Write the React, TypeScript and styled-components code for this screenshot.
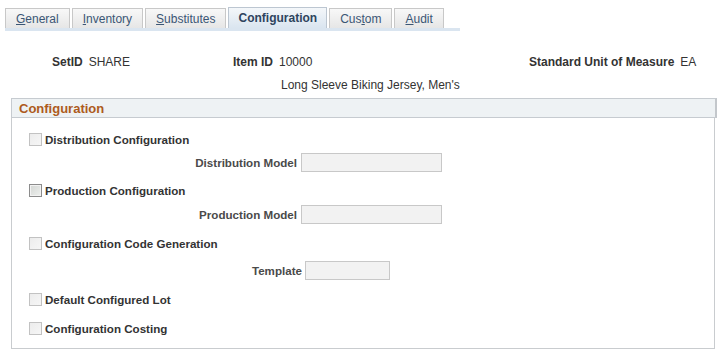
import styled, { createGlobalStyle } from "styled-components";

const GlobalStyle = createGlobalStyle`
  body {
    margin: 0;
    background: #fff;
    font-family: "Liberation Sans", Arial, sans-serif;
    font-size: 12px;
    color: #333;
  }
`;

const Page = styled.div`
  width: 725px;
  height: 358px;
  overflow: hidden;
`;

const TabStrip = styled.div`
  display: flex;
  align-items: flex-end;
  gap: 2px;
  margin: 7px 0 0 5px;
  width: 455px;
  border-bottom: 3px solid #dae5f0;
`;

const Tab = styled.div<{ $active?: boolean }>`
  box-sizing: border-box;
  height: ${(p) => (p.$active ? "21px" : "20px")};
  padding: 0 ${(p) => (p.$active ? "9px" : "10px")};
  display: flex;
  align-items: center;
  border: 1px solid ${(p) => (p.$active ? "#bcc6d1" : "#c8c8c8")};
  border-bottom: none;
  background: ${(p) =>
    p.$active
      ? "linear-gradient(#f4f7fa, #dae5f0)"
      : "linear-gradient(#f8f8f8, #e6e6e6)"};
  color: ${(p) => (p.$active ? "#2e445e" : "#3b5675")};
  font-weight: ${(p) => (p.$active ? "bold" : "normal")};
  white-space: nowrap;

  u {
    text-decoration: underline;
  }
`;

const InfoRow = styled.div`
  display: grid;
  grid-template-columns: 181px 296px auto;
  margin-top: 24px;
  padding-left: 52px;
  line-height: 14px;
`;

const InfoItem = styled.div`
  display: flex;
  gap: 6px;
`;

const InfoLabel = styled.span`
  font-weight: bold;
  color: #333;
`;

const InfoValue = styled.span`
  color: #333;
`;

const Description = styled.div`
  margin-top: 9px;
  padding-left: 281px;
  line-height: 14px;
  color: #333;
`;

const Section = styled.div`
  margin: 6px 8px 0 11px;
`;

const SectionHeader = styled.div`
  box-sizing: border-box;
  height: 20px;
  display: flex;
  align-items: center;
  padding-left: 7px;
  background: #eef2f4;
  border: 1px solid #c6cbd0;
  border-right: 2px solid #c3c7cb;
  color: #ad5a1c;
  font-weight: bold;
  font-size: 13px;
`;

const SectionBody = styled.div`
  width: 704px;
  border: 1px solid #c9cccf;
  border-top: none;
  padding: 15px 0 13px 17px;
  box-sizing: border-box;
`;

const CheckRow = styled.div<{ $top: number }>`
  display: flex;
  align-items: center;
  gap: 3px;
  height: 13px;
  margin-top: ${(p) => p.$top}px;
`;

const CheckBox = styled.span<{ $dark?: boolean }>`
  box-sizing: border-box;
  width: 13px;
  height: 13px;
  flex: none;
  border: 1px solid ${(p) => (p.$dark ? "#8c8c8c" : "#c2c2c2")};
  background: ${(p) =>
    p.$dark
      ? "linear-gradient(135deg, #d3d6d3, #eef0ee)"
      : "linear-gradient(135deg, #ececec, #f6f6f6)"};
  box-shadow: ${(p) => (p.$dark ? "inset 0 0 0 1px #f2f2f2" : "none")};
`;

const CheckLabel = styled.span`
  font-weight: bold;
  font-size: 11.6px;
  color: #333;
  white-space: nowrap;
`;

const FieldRow = styled.div<{ $top: number }>`
  display: flex;
  align-items: center;
  height: 19px;
  margin-top: ${(p) => p.$top}px;
`;

const FieldLabel = styled.span<{ $width: number }>`
  width: ${(p) => p.$width}px;
  text-align: right;
  font-weight: bold;
  font-size: 11.6px;
  color: #4a4a4a;
  white-space: nowrap;
`;

const Field = styled.span<{ $width: number; $gap: number }>`
  box-sizing: border-box;
  width: ${(p) => p.$width}px;
  height: 19px;
  margin-left: ${(p) => p.$gap}px;
  background: #f2f2f2;
  border: 1px solid #c8c8c8;
`;

const tabs: { key: string; pre: string; acc: string; post: string; active?: boolean }[] = [
  { key: "general", pre: "", acc: "G", post: "eneral" },
  { key: "inventory", pre: "", acc: "I", post: "nventory" },
  { key: "substitutes", pre: "", acc: "S", post: "ubstitutes" },
  { key: "configuration", pre: "Configuration", acc: "", post: "", active: true },
  { key: "custom", pre: "Cus", acc: "t", post: "om" },
  { key: "audit", pre: "", acc: "A", post: "udit" },
];

function App(): JSX.Element {
  return (
    <Page>
      <GlobalStyle />
      <TabStrip>
        {tabs.map((t) => (
          <Tab key={t.key} $active={t.active}>
            {t.pre}
            {t.acc && <u>{t.acc}</u>}
            {t.post}
          </Tab>
        ))}
      </TabStrip>

      <InfoRow>
        <InfoItem>
          <InfoLabel>SetID</InfoLabel>
          <InfoValue>SHARE</InfoValue>
        </InfoItem>
        <InfoItem>
          <InfoLabel>Item ID</InfoLabel>
          <InfoValue>10000</InfoValue>
        </InfoItem>
        <InfoItem>
          <InfoLabel>Standard Unit of Measure</InfoLabel>
          <InfoValue>EA</InfoValue>
        </InfoItem>
      </InfoRow>
      <Description>Long Sleeve Biking Jersey, Men's</Description>

      <Section>
        <SectionHeader>Configuration</SectionHeader>
        <SectionBody>
          <CheckRow $top={0}>
            <CheckBox />
            <CheckLabel>Distribution Configuration</CheckLabel>
          </CheckRow>
          <FieldRow $top={7}>
            <FieldLabel $width={268}>Distribution Model</FieldLabel>
            <Field $width={141} $gap={4} />
          </FieldRow>

          <CheckRow $top={12}>
            <CheckBox $dark />
            <CheckLabel>Production Configuration</CheckLabel>
          </CheckRow>
          <FieldRow $top={8}>
            <FieldLabel $width={268}>Production Model</FieldLabel>
            <Field $width={141} $gap={4} />
          </FieldRow>

          <CheckRow $top={13}>
            <CheckBox />
            <CheckLabel>Configuration Code Generation</CheckLabel>
          </CheckRow>
          <FieldRow $top={11}>
            <FieldLabel $width={273}>Template</FieldLabel>
            <Field $width={85} $gap={3} />
          </FieldRow>

          <CheckRow $top={13}>
            <CheckBox />
            <CheckLabel>Default Configured Lot</CheckLabel>
          </CheckRow>
          <CheckRow $top={16}>
            <CheckBox />
            <CheckLabel>Configuration Costing</CheckLabel>
          </CheckRow>
        </SectionBody>
      </Section>
    </Page>
  );
}

export default App;
